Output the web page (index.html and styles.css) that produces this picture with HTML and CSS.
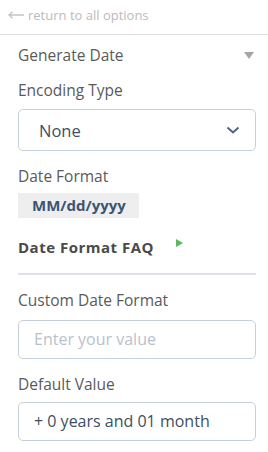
FILE: index.html
```
<!DOCTYPE html>
<html lang="en">
<head>
	<meta charset="UTF-8">
	<title>Generate Date</title>
	<link rel="stylesheet" href="styles.css">
</head>
<body>
	<a href="javascript:;" class="back">
		<svg width="16" height="8" viewBox="0 0 16 8"><path d="M1 4 H16 M4.5 0.8 L1 4 L4.5 7.2" fill="none" stroke="#c4c4c4" stroke-width="1.3"/></svg>
		<span>return to all options</span>
	</a>
	<div class="panel">
		<div class="title">
			<span>Generate Date</span>
			<span class="caret"></span>
		</div>

		<div class="label">Encoding Type</div>
		<div class="select">
			<span>None</span>
			<svg width="14" height="8" viewBox="0 0 14 8"><path d="M1.5 1.5 L7 6.5 L12.5 1.5" fill="none" stroke="#4d6584" stroke-width="2"/></svg>
		</div>

		<div class="label">Date Format</div>
		<div class="code">MM/dd/yyyy</div>

		<div class="faq">
			<span>Date Format FAQ</span>
			<span class="play"></span>
		</div>

		<div class="line"></div>

		<div class="label">Custom Date Format</div>
		<div class="input placeholder">Enter your value</div>

		<div class="label">Default Value</div>
		<div class="input value">+ 0 years and 01 month</div>
	</div>
</body>
</html>
```
FILE: styles.css
```
*{
	margin: 0;
	padding: 0;
	box-sizing: border-box;
}
body{
	width: 268px;
	height: 452px;
	background: #fff;
	font-family: "Open Sans", "Liberation Sans", sans-serif;
	color: #555;
	overflow: hidden;
}
.back{
	display: flex;
	align-items: center;
	gap: 4px;
	height: 35px;
	padding: 0 0 4px 8px;
	font-size: 13px;
	color: #bbb;
	text-decoration: none;
	border-bottom: 1px solid #ddd;
}
.panel{
	padding: 0 12px 0 18px;
}
.title{
	display: flex;
	justify-content: space-between;
	align-items: center;
	height: 20px;
	margin-top: 10px;
	font-size: 15.5px;
	color: #5a5a5a;
}
.caret{
	width: 0;
	height: 0;
	margin-right: 2px;
	border-left: 5px solid transparent;
	border-right: 5px solid transparent;
	border-top: 7px solid #a5a5a5;
}
.label{
	height: 20px;
	line-height: 20px;
	margin-top: 15px;
	font-size: 15.5px;
	color: #5a5a5a;
}
.select{
	display: flex;
	justify-content: space-between;
	align-items: center;
	height: 42px;
	margin-top: 9px;
	padding: 0 15px 0 20px;
	border: 1px solid #c5d0dc;
	border-radius: 5px;
	font-size: 16.5px;
	color: #3d4f63;
}
.code{
	display: inline-block;
	height: 25px;
	line-height: 25px;
	margin-top: 7px;
	padding: 0 13px 0 14px;
	background: #eee;
	font-size: 15px;
	font-weight: 700;
	color: #3b5573;
}
.faq{
	display: flex;
	align-items: center;
	height: 20px;
	margin-top: 19px;
	font-size: 15px;
	font-weight: 700;
	letter-spacing: 0.5px;
	color: #4a4a4a;
}
.play{
	width: 0;
	height: 0;
	margin-left: 22px;
	margin-top: -8px;
	border-top: 4px solid transparent;
	border-bottom: 4px solid transparent;
	border-left: 7px solid #5cb85c;
}
.line{
	height: 2px;
	margin-top: 16px;
	background: #dde2e8;
}
.input{
	height: 39px;
	line-height: 37px;
	margin-top: 10px;
	padding-left: 15px;
	border: 1px solid #c5d0dc;
	border-radius: 5px;
	font-size: 16px;
}
.placeholder{
	color: #b8c2cc;
}
.value{
	margin-top: 8px;
	color: #3d4f63;
}
```
